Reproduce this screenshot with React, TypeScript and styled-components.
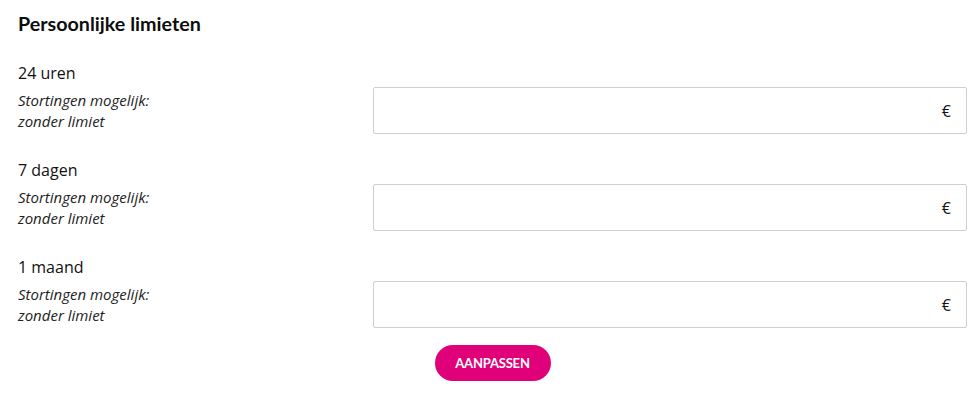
import React from "react";
import styled, { createGlobalStyle } from "styled-components";

const Global = createGlobalStyle`
  html, body { margin: 0; padding: 0; background: #fff; }
  body { font-family: "Open Sans", sans-serif; color: #111; }
`;

const Page = styled.div`
  padding: 12px 8px 0 18px;
  width: 949px;
`;

const Title = styled.h2`
  margin: 0;
  font-family: Lato, "Open Sans", sans-serif;
  font-weight: 700;
  font-size: 19.7px;
  line-height: 24px;
  color: #0d0d0d;
`;

const List = styled.div`
  display: flex;
  flex-direction: column;
  gap: 25px;
  margin-top: 26px;
`;

const Section = styled.div`
  display: flex;
  flex-direction: column;
`;

const Period = styled.div`
  font-size: 16px;
  line-height: 22px;
  color: #111;
`;

const Row = styled.div`
  display: grid;
  grid-template-columns: 355px 1fr;
  margin-top: 3px;
`;

const Note = styled.div`
  font-style: italic;
  font-size: 15px;
  line-height: 21px;
  padding-top: 3px;
  color: #222;
`;

const Field = styled.label`
  display: flex;
  align-items: center;
  height: 47px;
  box-sizing: border-box;
  border: 1px solid #cfcfcf;
  border-radius: 2px;
  padding: 0 15px 0 12px;
  background: #fff;
`;

const Input = styled.input`
  flex: 1;
  min-width: 0;
  border: 0;
  outline: none;
  background: transparent;
  font-family: "Open Sans", sans-serif;
  font-size: 16px;
`;

const Currency = styled.span`
  font-size: 16px;
  color: #111;
`;

const Actions = styled.div`
  display: flex;
  justify-content: center;
  margin-top: 17px;
`;

const Button = styled.button`
  height: 36px;
  width: 116px;
  border: 0;
  border-radius: 18px;
  background: #e0007a;
  color: #fff;
  font-family: Lato, "Open Sans", sans-serif;
  font-weight: 700;
  font-size: 13px;
  letter-spacing: -0.2px;
  cursor: pointer;
`;

const periods = ["24 uren", "7 dagen", "1 maand"];

export default function App() {
  return (
    <Page>
      <Global />
      <Title>Persoonlijke limieten</Title>
      <List>
        {periods.map((p) => (
          <Section key={p}>
            <Period>{p}</Period>
            <Row>
              <Note>
                Stortingen mogelijk:
                <br />
                zonder limiet
              </Note>
              <Field>
                <Input type="text" />
                <Currency>€</Currency>
              </Field>
            </Row>
          </Section>
        ))}
      </List>
      <Actions>
        <Button>AANPASSEN</Button>
      </Actions>
    </Page>
  );
}
